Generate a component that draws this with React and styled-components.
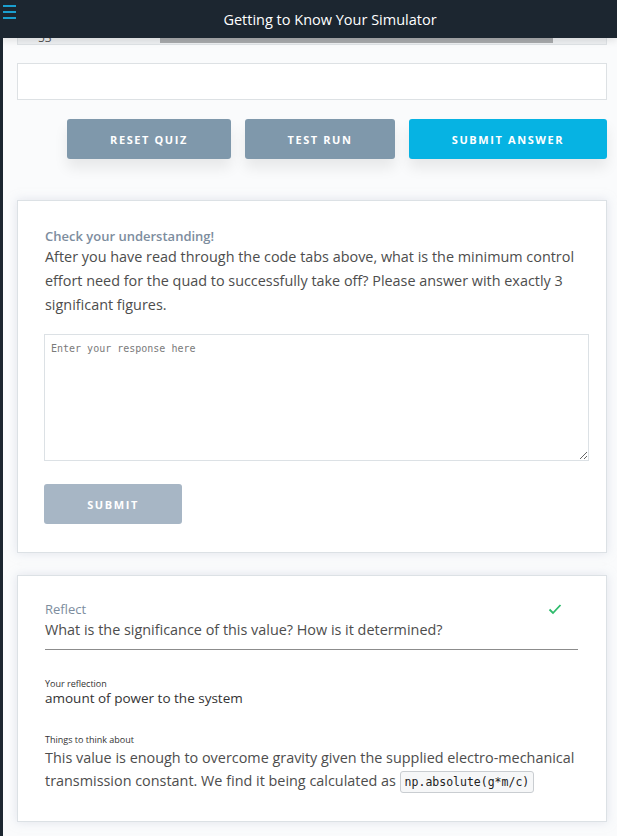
import React from 'react';
import styled, { createGlobalStyle } from 'styled-components';

const GlobalStyle = createGlobalStyle`
  html, body {
    margin: 0;
    padding: 0;
    background: #fafbfc;
  }
  * {
    box-sizing: border-box;
  }
`;

const Page = styled.div`
  display: flex;
  min-height: 836px;
  font-family: 'Open Sans', 'Noto Sans', sans-serif;
`;

const SideEdge = styled.div`
  width: 3px;
  flex-shrink: 0;
  background: #1c2630;
`;

const Main = styled.div`
  flex: 1;
  display: flex;
  flex-direction: column;
  background: #fafbfc;
  overflow: hidden;
`;

const TopBar = styled.header`
  position: relative;
  z-index: 2;
  height: 38px;
  display: flex;
  align-items: center;
  justify-content: center;
  padding-left: 43px;
  margin-left: -3px;
  background: #1c2630;
  color: #ffffff;
  font-size: 14.5px;
  box-shadow: 0 2px 8px rgba(0, 0, 0, 0.12);
`;

const MenuIcon = styled.svg`
  position: absolute;
  left: 0;
  top: 4px;
`;

const Content = styled.div`
  display: flex;
  flex-direction: column;
  padding: 0 10px 20px 14px;
`;

const ScrollStrip = styled.div`
  position: relative;
  height: 7px;
  border: 1px solid #dfe3e6;
  border-top: none;
  background: #eef0f2;
  display: flex;
  align-items: flex-start;
  padding-left: 142px;
  padding-right: 53px;
  overflow: hidden;
`;

const StripLabel = styled.span`
  position: absolute;
  left: 20px;
  top: -9px;
  font-size: 12px;
  color: #555;
`;

const Thumb = styled.div`
  flex: 1;
  height: 5px;
  background: #a9abad;
`;

const BlankInput = styled.div`
  margin-top: 18px;
  height: 37px;
  background: #ffffff;
  border: 1px solid #dde1e4;
`;

const ButtonRow = styled.div`
  display: flex;
  justify-content: flex-end;
  gap: 14px;
  margin-top: 19px;
`;

const ActionButton = styled.button`
  width: ${({ $width }) => $width}px;
  height: 40px;
  border: none;
  border-radius: 3px;
  background: ${({ $primary }) => ($primary ? '#06b3e3' : '#7f98ab')};
  color: #ffffff;
  font-family: 'Open Sans', 'Noto Sans', sans-serif;
  font-weight: 700;
  font-size: 11px;
  letter-spacing: 1.6px;
  box-shadow: 0 9px 14px rgba(0, 0, 0, 0.08);
`;

const Card = styled.section`
  margin-top: ${({ $gap }) => $gap}px;
  background: #ffffff;
  border: 1px solid #dce1e5;
  box-shadow: 0 0 9px rgba(200, 206, 222, 0.5);
  padding: ${({ $padTop }) => $padTop}px 28px 28px 27px;
`;

const HeadRow = styled.div`
  display: flex;
  justify-content: space-between;
  align-items: center;
  padding-right: 16px;
`;

const Label = styled.div`
  font-size: 13px;
  line-height: 18px;
  color: #7d8d9e;
  font-weight: ${({ $bold }) => ($bold ? 600 : 400)};
`;

const Body = styled.div`
  font-size: 14.4px;
  line-height: ${({ $line }) => $line || 24}px;
  color: #4d4d4d;
`;

const Question = styled(Body)`
  padding-bottom: 7px;
  border-bottom: 1px solid #8c8c8c;
`;

const ResponseArea = styled.textarea`
  display: block;
  margin: 17px 0 0 -1px;
  width: 545px;
  height: 127px;
  padding: 8px 6px;
  border: 1px solid #dce1e5;
  border-radius: 0;
  background: #ffffff;
  font-family: 'DejaVu Sans Mono', 'Liberation Mono', monospace;
  font-size: 10px;
  color: #444;
  resize: vertical;
  &::placeholder {
    color: #7a7a7a;
  }
`;

const SubmitButton = styled.button`
  display: block;
  margin: 23px 0 0 -1px;
  width: 138px;
  height: 40px;
  border: none;
  border-radius: 3px;
  background: #a7b6c5;
  color: #ffffff;
  font-family: 'Open Sans', 'Noto Sans', sans-serif;
  font-weight: 700;
  font-size: 11px;
  letter-spacing: 1.6px;
`;

const SmallLabel = styled.div`
  margin-top: ${({ $gap }) => $gap}px;
  font-size: 9px;
  line-height: 12px;
  color: #333;
`;

const Answer = styled.div`
  font-size: 13.5px;
  line-height: 16px;
  color: #333;
`;

const Code = styled.code`
  display: inline-block;
  padding: 1px 4px;
  border: 1px solid #c9cdd1;
  border-radius: 3px;
  background: #f6f7f8;
  font-family: 'DejaVu Sans Mono', 'Liberation Mono', monospace;
  font-size: 11.5px;
  line-height: 18px;
  color: #222;
`;

const Check = () => (
  <svg width="14" height="12" viewBox="0 0 14 12" fill="none">
    <path d="M1.5 6.5 L5 10 L12.5 2" stroke="#2dbb6b" strokeWidth="1.8" />
  </svg>
);

export default function App() {
  return (
    <>
      <GlobalStyle />
      <Page>
        <SideEdge />
        <Main>
          <TopBar>
            <MenuIcon width="16" height="16" viewBox="0 0 16 16">
              <rect x="0" y="1" width="16" height="2" fill="#1a9fd0" />
              <rect x="0" y="7" width="16" height="2" fill="#1a9fd0" />
              <rect x="0" y="13" width="16" height="2" fill="#1a9fd0" />
            </MenuIcon>
            Getting to Know Your Simulator
          </TopBar>
          <Content>
            <ScrollStrip>
              <StripLabel>53</StripLabel>
              <Thumb />
            </ScrollStrip>
            <BlankInput />
            <ButtonRow>
              <ActionButton $width={164}>RESET QUIZ</ActionButton>
              <ActionButton $width={150}>TEST RUN</ActionButton>
              <ActionButton $width={198} $primary>SUBMIT ANSWER</ActionButton>
            </ButtonRow>

            <Card $gap={41} $padTop={26}>
              <Label $bold>Check your understanding!</Label>
              <Body>
                After you have read through the code tabs above, what is the minimum control
                effort need for the quad to successfully take off? Please answer with exactly 3
                significant figures.
              </Body>
              <ResponseArea placeholder="Enter your response here" />
              <SubmitButton>SUBMIT</SubmitButton>
            </Card>

            <Card $gap={22} $padTop={24}>
              <HeadRow>
                <Label>Reflect</Label>
                <Check />
              </HeadRow>
              <Question>What is the significance of this value? How is it determined?</Question>
              <SmallLabel $gap={28}>Your reflection</SmallLabel>
              <Answer>amount of power to the system</Answer>
              <SmallLabel $gap={28}>Things to think about</SmallLabel>
              <Body $line={23}>
                This value is enough to overcome gravity given the supplied electro-mechanical
                transmission constant. We find it being calculated as <Code>np.absolute(g*m/c)</Code>
              </Body>
            </Card>
          </Content>
        </Main>
      </Page>
    </>
  );
}
